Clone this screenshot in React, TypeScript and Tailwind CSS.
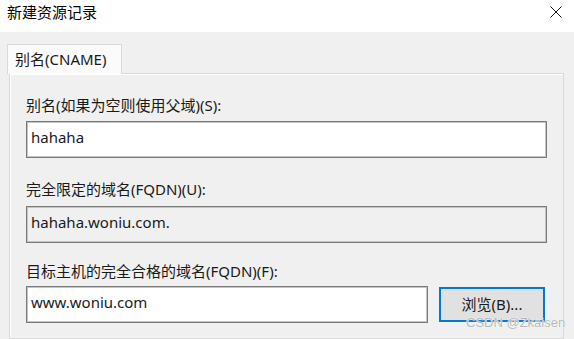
const font = '[font-family:"Noto_Sans","Noto_Sans_CJK_SC",sans-serif]';

function CloseIcon() {
  return (
    <svg width="12" height="12" viewBox="0 0 12 12" className="block">
      <path d="M0.5 0.5 L11.5 11.5 M11.5 0.5 L0.5 11.5" stroke="#111" strokeWidth="1" fill="none" />
    </svg>
  );
}

interface FieldProps {
  label: string;
  value: string;
  readOnly?: boolean;
  className?: string;
}

function FieldBox({ value, readOnly, className }: Omit<FieldProps, 'label'>) {
  return (
    <div
      className={`h-[37px] border border-[#7a7a7a] px-[4px] pt-[5px] text-[15px] leading-[20px] text-[#1a1a1a] shadow-[inset_0_0_0_1px_#c4c4c4] ${
        readOnly ? 'bg-[#f0f0f0]' : 'bg-white'
      } ${className ?? ''}`}
    >
      {value}
    </div>
  );
}

export default function App() {
  return (
    <div className={`relative flex h-[339px] w-[574px] flex-col overflow-hidden bg-[#f0f0f0] ${font}`}>
      <div className="flex h-[32px] shrink-0 items-start justify-between bg-white">
        <span className="pl-[7px] pt-[2px] text-[15px] leading-[20px] text-black">新建资源记录</span>
        <div className="pr-[12px] pt-[6px]">
          <CloseIcon />
        </div>
      </div>

      <div className="flex flex-1 flex-col pl-[7px] pr-[10px] pt-[12px]">
        <div className="relative z-10 -mb-px flex h-[30px] w-[115px] items-center border border-b-0 border-[#d9d9d9] bg-[#fbfbfb] pl-[7px] text-[15px] text-[#1a1a1a]">
          别名(CNAME)
        </div>
        <div className="ml-[2px] flex flex-1 flex-col border border-[#d9d9d9] bg-[#f0f0f0] pl-[16px] pr-[16px] pt-[21px] shadow-[inset_1px_1px_0_#ffffff]">
          <div className="text-[15px] leading-[20px] text-[#1a1a1a]">别名(如果为空则使用父域)(S):</div>
          <FieldBox value="hahaha" className="mt-[6px]" />

          <div className="mt-[21px] text-[15px] leading-[20px] text-[#1a1a1a]">完全限定的域名(FQDN)(U):</div>
          <FieldBox value="hahaha.woniu.com." readOnly className="mt-[7px]" />

          <div className="mt-[18px] text-[15px] leading-[20px] text-[#1a1a1a]">目标主机的完全合格的域名(FQDN)(F):</div>
          <div className="mt-[5px] flex items-start gap-[11px]">
            <FieldBox value="www.woniu.com" className="w-[402px]" />
            <button className="mt-px flex h-[35px] w-[106px] items-center justify-center border-2 border-[#0078d7] bg-[#e1e1e1] text-[15px] text-[#1a1a1a]">
              浏览(B)...
            </button>
          </div>
        </div>
      </div>

      <div className="absolute left-[466px] top-[315px] text-[13px] leading-[16px] text-[#b8b8b8] [font-family:'Liberation_Sans',sans-serif] [text-shadow:0_0_1px_#fff,0_0_1px_#fff]">
        CSDN @Zkaisen
      </div>
    </div>
  );
}
